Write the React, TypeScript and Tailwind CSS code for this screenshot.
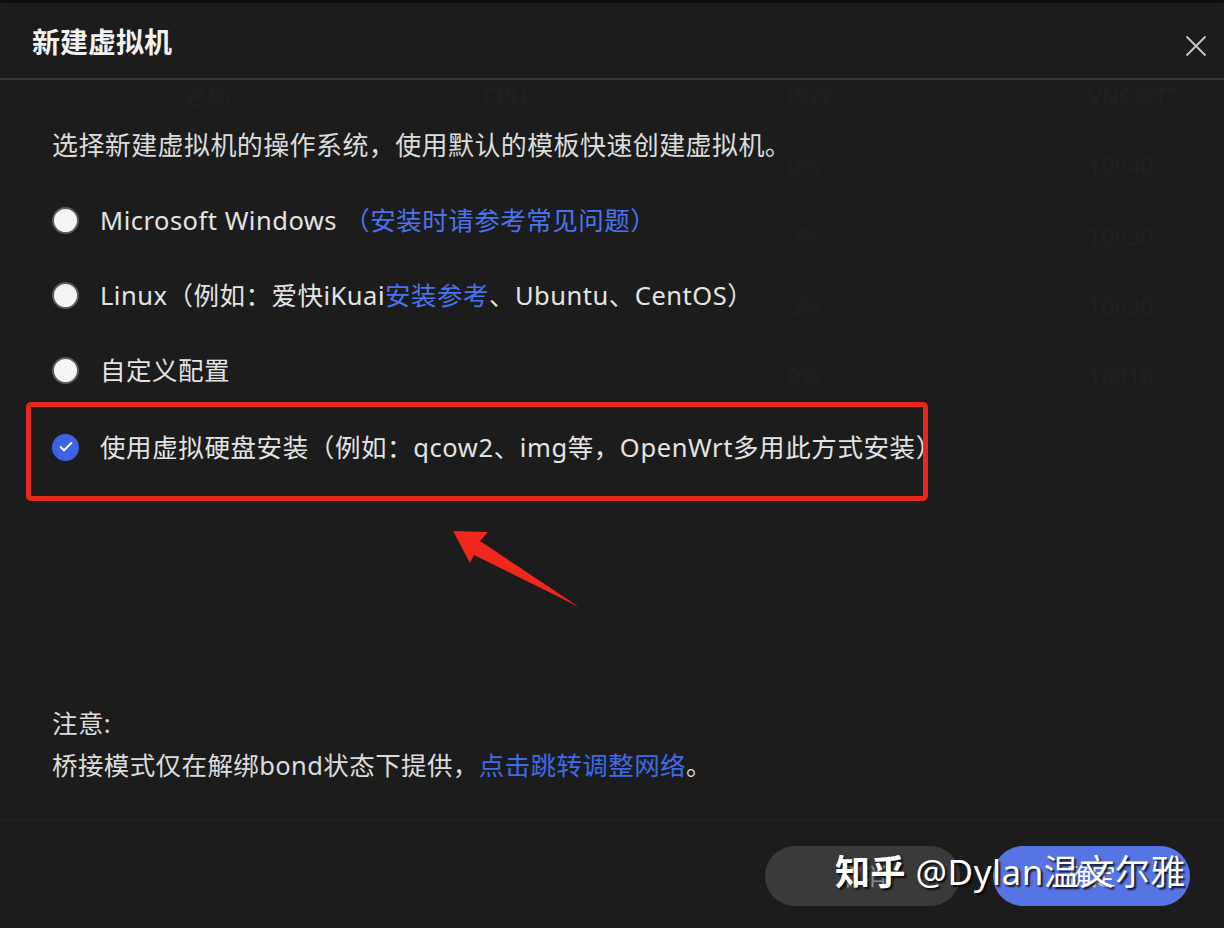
import { Check } from 'lucide-react';

const ghostRows = [
  { cpu: '0%', port: '10040' },
  { cpu: '0%', port: '10030' },
  { cpu: '0%', port: '10020' },
  { cpu: '0%', port: '10010' },
];

function Radio({ checked = false }: { checked?: boolean }) {
  if (checked) {
    return (
      <span className="flex h-[27px] w-[27px] shrink-0 items-center justify-center rounded-full bg-[#3d63e4]">
        <Check size={16} strokeWidth={3} className="text-white" />
      </span>
    );
  }
  return <span className="h-[27px] w-[27px] shrink-0 rounded-full border-2 border-[#5c5c5c] bg-[#f4f4f4]" />;
}

function Option({ children, checked = false }: { children: React.ReactNode; checked?: boolean }) {
  return (
    <div className="flex h-[75px] items-center gap-[21px]">
      <Radio checked={checked} />
      <div className="whitespace-nowrap text-[25.5px] tracking-[0.5px] text-[#e4e4e4]">{children}</div>
    </div>
  );
}

export default function App() {
  return (
    <div className="relative h-[928px] w-[1224px] overflow-hidden bg-[#0e0e0e] font-['Noto_Sans','Noto_Sans_CJK_SC',sans-serif]">
      {/* page behind the modal */}
      <div className="mt-[3px] h-[925px] bg-[#1d1d1d] text-[23px] text-[#3c3c3c]">
        <div className="grid h-[110px] grid-cols-[184px_298px_305px_301px_136px] items-end">
          <span />
          <span>名称</span>
          <span>CPU</span>
          <span>内存</span>
          <span>VNC端口</span>
        </div>
        {ghostRows.map((r) => (
          <div key={r.port} className="grid h-[70px] grid-cols-[787px_301px_136px] items-end">
            <span />
            <span>{r.cpu}</span>
            <span>{r.port}</span>
          </div>
        ))}
      </div>

      {/* modal */}
      <div className="absolute inset-x-0 bottom-0 top-[3px] flex flex-col rounded-t-[10px] bg-[#1d1d1d]/[0.9]">
        <div className="flex h-[75px] shrink-0 items-center justify-between pl-[32px] pr-[17px] pt-[2px]">
          <h1 className="text-[28px] font-bold text-[#f2f2f2]">新建虚拟机</h1>
          <svg width="22" height="22" viewBox="0 0 22 22" className="mt-[8px]">
            <path d="M1.5 1.5 L20.5 20.5 M20.5 1.5 L1.5 20.5" stroke="#c4c4c4" strokeWidth="2" />
          </svg>
        </div>
        <div className="h-[2px] shrink-0 bg-[#363636]" />

        <div className="flex flex-1 flex-col px-[52px] pt-[45px]">
          <p className="h-[40px] text-[26px] leading-[40px] tracking-[0.4px] text-[#dcdcdc]">
            选择新建虚拟机的操作系统，使用默认的模板快速创建虚拟机。
          </p>

          <div className="mt-[18px] flex flex-col">
            <Option>
              Microsoft Windows <span className="text-[#4a74ee]">（安装时请参考常见问题）</span>
            </Option>
            <Option>
              Linux（例如：爱快iKuai<span className="text-[#4a74ee]">安装参考</span>、Ubuntu、CentOS）
            </Option>
            <Option>自定义配置</Option>

            <div className="-ml-[26px] mt-[-6px] h-[99px] w-[902px] rounded-[5px] border-[5px] border-[#e5281b] pl-[21px]">
              <div className="flex h-[80px] items-center gap-[21px] overflow-hidden pr-[6px]">
                <Radio checked />
                <div className="whitespace-nowrap text-[25.5px] tracking-[0.6px] text-[#e4e4e4]">
                  使用虚拟硬盘安装（例如：qcow2、img等，OpenWrt多用此方式安装）
                </div>
              </div>
            </div>
          </div>

          <div className="mt-auto pb-[34px] text-[25.5px] leading-[42px] tracking-[0.4px] text-[#dcdcdc]">
            <p>注意:</p>
            <p>
              桥接模式仅在解绑bond状态下提供，<span className="text-[#3f6ae8]">点击跳转调整网络</span>。
            </p>
          </div>
        </div>

        <div className="relative flex h-[108px] shrink-0 justify-end gap-[33px] border-t border-[#252525] pr-[34px] pt-[25px]">
          <button className="h-[60px] w-[195px] rounded-full bg-[#3a3a3a] text-[24px] text-[#8c8c8c]">取消</button>
          <button className="h-[60px] w-[197px] rounded-full bg-[#5675e2] text-[24px] text-white">确定</button>
          <div className="absolute left-[835px] top-[28px] whitespace-nowrap text-[35px] leading-[46px] tracking-[0.5px] text-white [text-shadow:2px_2px_2px_rgba(0,0,0,0.85)]">
            <span className="font-bold">知乎</span> @Dylan温文尔雅
          </div>
        </div>
      </div>

      {/* annotation arrow */}
      <svg className="absolute left-0 top-0" width="1224" height="928" viewBox="0 0 1224 928">
        <path d="M453 531 L488 532 L480 541 L579 607 L474 555 L470 563 Z" fill="#f0281c" />
      </svg>
    </div>
  );
}
